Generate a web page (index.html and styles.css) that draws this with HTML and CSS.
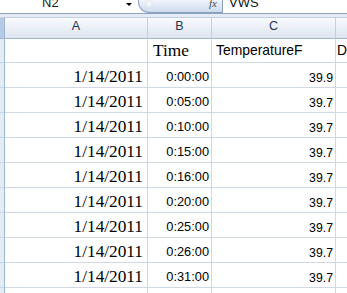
FILE: index.html
```html
<!DOCTYPE html>
<html>
<head>
<meta charset="utf-8">
<link rel="stylesheet" href="styles.css">
</head>
<body>
<div class="toolbar">
  <div class="namebox"><span class="name">N2</span></div>
  <div class="arrow-cell"><span class="arrow"></span></div>
  <div class="fxbox"><span class="knob"></span><span class="fx">fx</span></div>
  <div class="formula"><span class="ftext">VWS</span></div>
</div>
<div class="gap"></div>
<div class="sheet">
  <div class="hdr corner"></div><div class="hdr">A</div><div class="hdr">B</div><div class="hdr">C</div><div class="hdr last"></div>

  <div class="rh r1"></div><div class="c r1"></div><div class="c r1 serif left">Time</div><div class="c r1 sans left temp">TemperatureF</div><div class="c r1 sans left dcol">D</div>

  <div class="rh"></div><div class="c serif">1/14/2011</div><div class="c sans">0:00:00</div><div class="c sans num">39.9</div><div class="c last"></div>
  <div class="rh"></div><div class="c serif">1/14/2011</div><div class="c sans">0:05:00</div><div class="c sans num">39.7</div><div class="c last"></div>
  <div class="rh"></div><div class="c serif">1/14/2011</div><div class="c sans">0:10:00</div><div class="c sans num">39.7</div><div class="c last"></div>
  <div class="rh"></div><div class="c serif">1/14/2011</div><div class="c sans">0:15:00</div><div class="c sans num">39.7</div><div class="c last"></div>
  <div class="rh"></div><div class="c serif">1/14/2011</div><div class="c sans">0:16:00</div><div class="c sans num">39.7</div><div class="c last"></div>
  <div class="rh"></div><div class="c serif">1/14/2011</div><div class="c sans">0:20:00</div><div class="c sans num">39.7</div><div class="c last"></div>
  <div class="rh"></div><div class="c serif">1/14/2011</div><div class="c sans">0:25:00</div><div class="c sans num">39.7</div><div class="c last"></div>
  <div class="rh"></div><div class="c serif">1/14/2011</div><div class="c sans">0:26:00</div><div class="c sans num">39.7</div><div class="c last"></div>
  <div class="rh"></div><div class="c serif">1/14/2011</div><div class="c sans">0:31:00</div><div class="c sans num">39.7</div><div class="c last"></div>
  <div class="rh"></div><div class="c"></div><div class="c"></div><div class="c"></div><div class="c last"></div>
</div>
</body>
</html>
```
FILE: styles.css
```css
* { box-sizing: border-box; }
html, body { margin: 0; padding: 0; }
body {
  width: 347px;
  height: 293px;
  overflow: hidden;
  background: #ffffff;
  font-family: "Liberation Sans", Arial, sans-serif;
}

.toolbar {
  display: flex;
  height: 14px;
  border-bottom: 1px solid #8ca2be;
  background: #ffffff;
  overflow: hidden;
}
.namebox {
  width: 124px;
  padding-left: 42px;
  overflow: hidden;
}
.name {
  display: block;
  font-size: 13px;
  line-height: 13px;
  margin-top: -4px;
  color: #1b1b1b;
}
.arrow-cell {
  width: 14px;
  padding-left: 2px;
  padding-top: 3px;
}
.arrow {
  display: block;
  width: 0;
  height: 0;
  border-left: 3px solid transparent;
  border-right: 3px solid transparent;
  border-top: 3px solid #000000;
}
.fxbox {
  width: 85px;
  height: 13px;
  border: 1px solid #8aa0bd;
  border-top: none;
  border-bottom-left-radius: 11px;
  background: linear-gradient(#f1f5fb, #cddbee);
  display: flex;
  align-items: flex-start;
  padding-left: 6px;
}
.knob {
  width: 8px;
  height: 9px;
  border-radius: 50%;
  background: radial-gradient(circle at 50% 40%, #ffffff, #dfe6ef 60%, #c9d5e4);
  margin-top: 0px;
}
.fx {
  margin-left: auto;
  margin-right: 5px;
  font-family: "Liberation Serif", serif;
  font-style: italic;
  font-size: 11px;
  line-height: 11px;
  margin-top: -2px;
  color: #4a4a4a;
}
.formula {
  flex: 1;
  padding-left: 6px;
}
.ftext {
  display: block;
  font-size: 13px;
  line-height: 13px;
  margin-top: -4px;
  color: #111111;
}

.gap {
  height: 3px;
  background: #e4ebf4;
}

.sheet {
  display: grid;
  grid-template-columns: 5px 143px 64px 124px 1fr;
  grid-template-rows: 22px 24px repeat(10, 25px);
}

.hdr {
  border-top: 1px solid #c3d1e3;
  border-bottom: 1px solid #9eb6ce;
  border-right: 1px solid #c0cedf;
  background: linear-gradient(#f8fafd, #dde5ef);
  font-size: 12.5px;
  line-height: 1;
  color: #1f3550;
  display: flex;
  align-items: flex-end;
  justify-content: center;
  padding-bottom: 6px;
}
.hdr.corner {
  background: #b4cae6;
  border-right: 1px solid #9eb6ce;
}
.hdr.last { border-right: none; }

.rh {
  background: #e3ebf6;
  border-right: 1px solid #9eb6ce;
  border-bottom: 1px solid #c5d5ea;
}

.c {
  border-right: 1px solid #d0d7e5;
  border-bottom: 1px solid #d0d7e5;
  display: flex;
  align-items: flex-end;
  justify-content: flex-end;
  white-space: nowrap;
  overflow: hidden;
  line-height: 1;
  color: #000000;
}
.c.last { border-right: none; }
.serif {
  font-family: "Liberation Serif", "Times New Roman", serif;
  font-size: 17.3px;
  padding-right: 4px;
  padding-bottom: 2px;
}
.sans {
  font-family: "Liberation Sans", Arial, sans-serif;
  font-size: 12.8px;
  padding-right: 2px;
  padding-bottom: 3px;
}
.num { font-size: 12.3px; }
.left { justify-content: flex-start; padding-left: 5px; }
.temp { font-size: 13.9px; padding-left: 4px; }
.dcol { padding-left: 1px; border-right: none; font-size: 13.9px; }
.r1.serif { padding-bottom: 3px; }
.r1.sans { padding-bottom: 4px; }
```
